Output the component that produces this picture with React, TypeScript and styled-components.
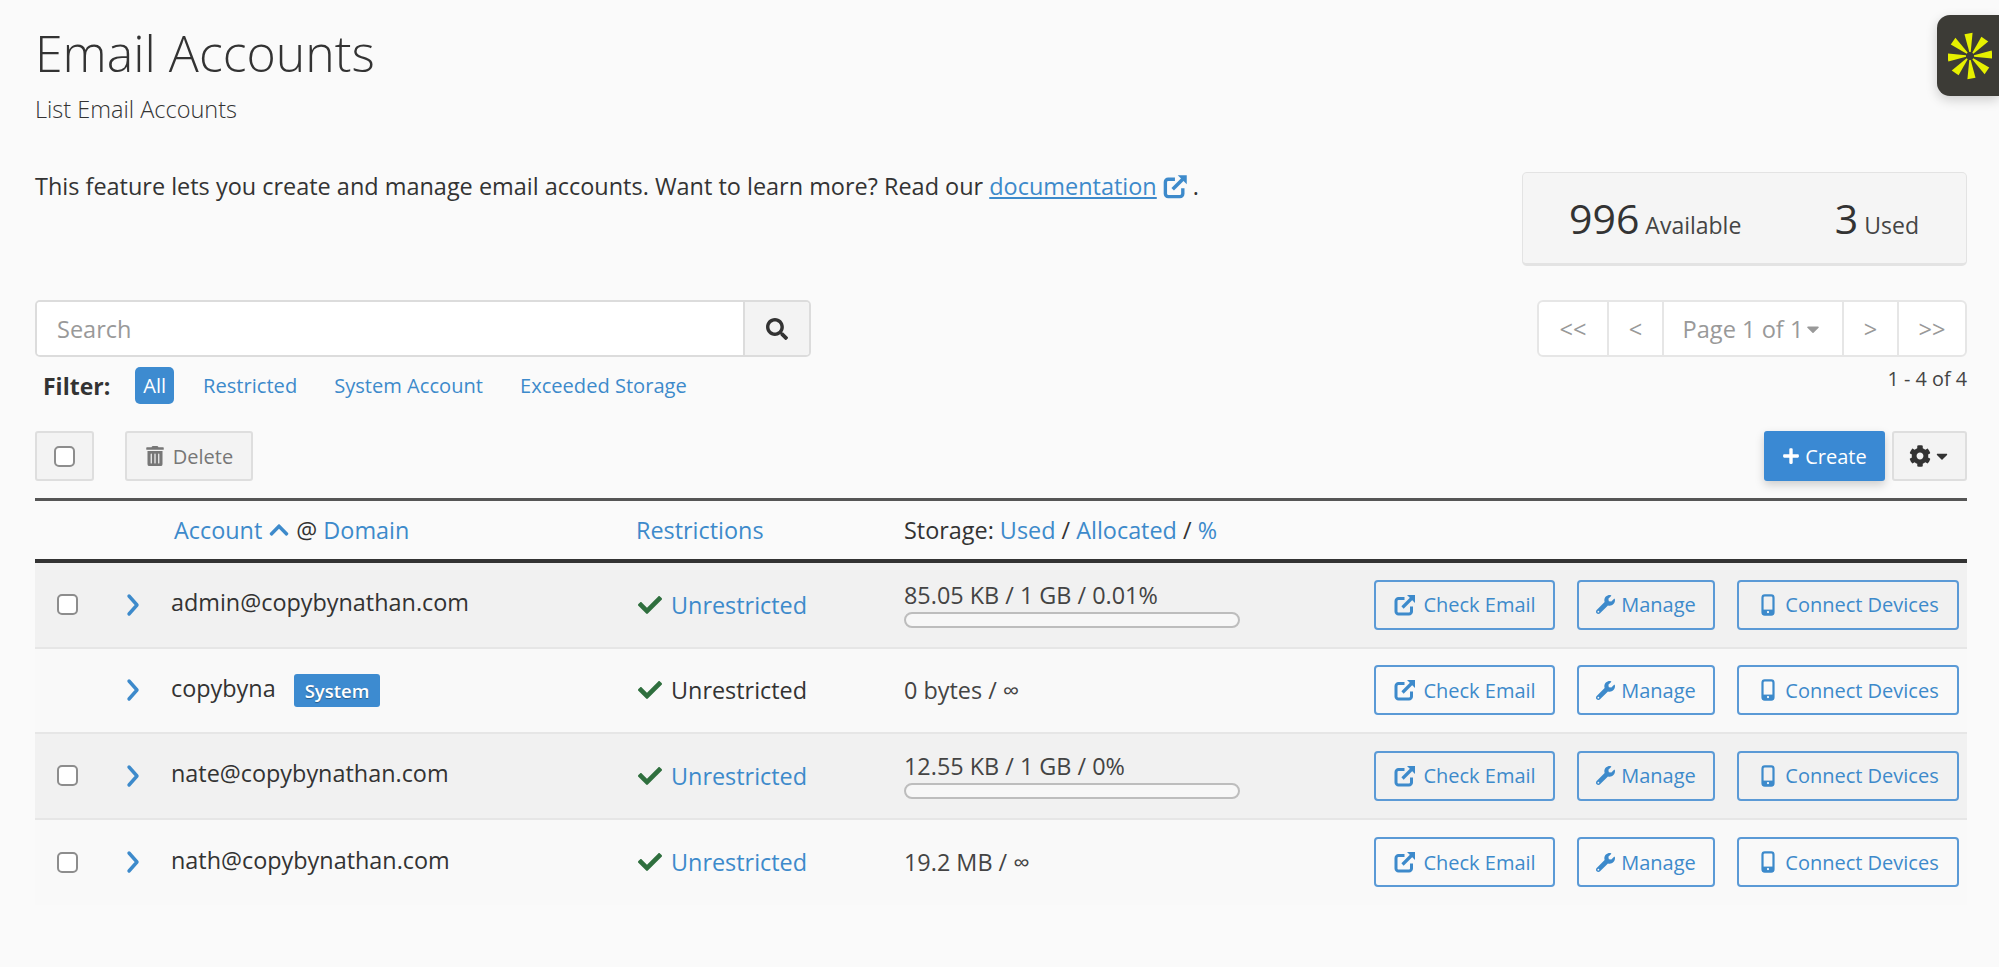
import React from "react";
import styled, { createGlobalStyle } from "styled-components";
import {
  FaSearch,
  FaTrashAlt,
  FaPlus,
  FaCog,
  FaCaretDown,
  FaChevronUp,
  FaCheck,
  FaWrench,
} from "react-icons/fa";

const LINK = "#3d8acb";

const GlobalStyle = createGlobalStyle`
  html, body {
    margin: 0;
    padding: 0;
    background: #fafafa;
    color: #333;
    font-family: "Open Sans", "Liberation Sans", sans-serif;
  }
  * { box-sizing: border-box; }
`;

const Page = styled.div`
  width: 1999px;
  height: 967px;
  padding: 24px 32px 0 35px;
  overflow: hidden;
  position: relative;
`;

const Title = styled.h1`
  margin: 0;
  font-size: 50px;
  line-height: 58px;
  font-weight: 300;
  color: #333;
`;

const Subtitle = styled.div`
  margin-top: 12px;
  font-size: 23.5px;
  line-height: 30px;
  font-weight: 300;
  color: #333;
`;

const IntroRow = styled.div`
  margin-top: 48px;
  display: flex;
  justify-content: space-between;
  align-items: flex-start;
`;

const Intro = styled.p`
  margin: 0;
  font-size: 23.46px;
  line-height: 28px;
  display: flex;
  align-items: center;
  white-space: pre;
`;

const DocLink = styled.a`
  color: ${LINK};
  text-decoration: underline;
`;

const DocIcon = styled.span`
  color: ${LINK};
  display: flex;
  margin: 0 4px 0 5px;
`;

const Stats = styled.div`
  width: 445px;
  height: 94px;
  background: #f5f5f5;
  border: 1px solid #e3e3e3;
  border-bottom-width: 3px;
  border-radius: 5px;
  display: flex;
  justify-content: space-between;
  align-items: baseline;
  padding: 17px 47px 0 46px;
`;

const Stat = styled.div`
  font-size: 23px;
  color: #444;
`;

const StatNumber = styled.span`
  font-size: 41px;
  color: #333;
  margin-right: 6px;
`;

const Toolbar = styled.div`
  margin-top: 34px;
  display: flex;
  justify-content: space-between;
  align-items: flex-start;
`;

const SearchBox = styled.div`
  width: 776px;
  height: 57px;
  display: flex;
  border: 2px solid #dcdcdc;
  border-radius: 5px;
  overflow: hidden;
`;

const SearchInput = styled.input`
  flex: 1;
  min-width: 0;
  border: 0;
  outline: 0;
  background: #fff;
  padding: 0 20px;
  font: inherit;
  font-size: 23.5px;
  line-height: 50px;
  &::placeholder { color: #999; opacity: 1; }
`;

const SearchButton = styled.button`
  width: 66px;
  border: 0;
  border-left: 2px solid #dcdcdc;
  background: #f3f3f3;
  color: #333;
  font-size: 22px;
  display: flex;
  align-items: center;
  justify-content: center;
  padding: 0;
`;

const FilterRow = styled.div`
  margin-top: 10px;
  height: 37px;
  display: flex;
  align-items: center;
  padding-left: 8px;
  font-size: 20.1px;
`;

const FilterLabel = styled.span`
  font-weight: 700;
  font-size: 23px;
  margin-right: 25px;
`;

const FilterItem = styled.a<{ $active?: boolean }>`
  color: ${(p) => (p.$active ? "#fff" : LINK)};
  background: ${(p) => (p.$active ? "#3d8bd0" : "transparent")};
  border-radius: 5px;
  height: 37px;
  line-height: 37px;
  padding: 0 ${(p) => (p.$active ? "8px" : "10px")};
  margin-right: ${(p) => (p.$active ? "19px" : "17px")};
`;

const RightColumn = styled.div`
  display: flex;
  flex-direction: column;
  align-items: flex-end;
`;

const Pager = styled.div`
  height: 57px;
  display: flex;
  background: #fff;
  border: 2px solid #e6e6e6;
  border-radius: 6px;
`;

const PagerCell = styled.div<{ $w: number }>`
  width: ${(p) => p.$w}px;
  display: flex;
  align-items: center;
  justify-content: center;
  color: #999;
  font-size: 23.6px;
  & + & { border-left: 2px solid #e6e6e6; }
`;

const CountLabel = styled.div`
  margin-top: 8px;
  font-size: 19.8px;
  line-height: 28px;
  color: #444;
`;

const ActionBar = styled.div`
  margin-top: 27px;
  display: flex;
  justify-content: space-between;
`;

const ActionGroup = styled.div<{ $gap: number }>`
  display: flex;
  gap: ${(p) => p.$gap}px;
`;

const GreyButton = styled.button<{ $w: number; $muted?: boolean }>`
  width: ${(p) => p.$w}px;
  height: 50px;
  padding: 0;
  border: 2px solid #dedede;
  border-radius: 3px;
  background: #f3f3f3;
  color: ${(p) => (p.$muted ? "#777" : "#333")};
  font: inherit;
  font-size: 20px;
  display: flex;
  align-items: center;
  justify-content: center;
  gap: 8px;
`;

const CreateButton = styled.button`
  width: 121px;
  height: 50px;
  padding: 0;
  border: 0;
  border-radius: 3px;
  background: #3a89d3;
  color: #fff;
  font: inherit;
  font-size: 20px;
  display: flex;
  align-items: center;
  justify-content: center;
  gap: 5px;
  box-shadow: 0 4px 10px rgba(0, 0, 0, 0.18);
`;

const GearGroup = styled.span`
  display: flex;
  align-items: center;
  gap: 2px;
`;

const CheckBox = styled.input.attrs({ type: "checkbox" })`
  appearance: none;
  width: 21px;
  height: 21px;
  margin: 0;
  background: #fff;
  border: 2px solid #8d8d8d;
  border-radius: 5px;
`;

const Table = styled.div`
  margin-top: 17px;
  border-top: 3px solid #555;
`;

const gridColumns = "136px 465px 268px 1fr auto";

const HeaderRow = styled.div`
  height: 62px;
  border-bottom: 4px solid #333;
  display: grid;
  grid-template-columns: ${gridColumns};
  align-items: center;
  font-size: 23.4px;
`;

const HeaderCell = styled.div<{ $col: number; $inset?: number }>`
  grid-column: ${(p) => p.$col};
  padding-left: ${(p) => p.$inset || 0}px;
  display: flex;
  align-items: center;
  white-space: pre;
  color: #333;
`;

const HeadLink = styled.a`
  color: ${LINK};
`;

const SortIcon = styled(FaChevronUp)`
  color: ${LINK};
  margin: 0 6px;
`;

const Row = styled.div<{ $striped: boolean }>`
  height: 85.5px;
  display: grid;
  grid-template-columns: ${gridColumns};
  align-items: center;
  background: ${(p) => (p.$striped ? "#f1f1f1" : "#f9f9f9")};
  border-bottom: 2px solid #e6e6e6;
  &:last-child { border-bottom: 0; }
`;

const SelectCell = styled.div`
  display: flex;
  align-items: center;
  height: 100%;
  padding-left: 22px;
  position: relative;
`;

const ExpandIcon = styled.svg`
  width: 16px;
  height: 24px;
  position: absolute;
  left: 90px;
  top: 50%;
  transform: translateY(-50%);
  fill: none;
  stroke: ${LINK};
  stroke-width: 3.4;
  stroke-linecap: round;
  stroke-linejoin: round;
`;

const AccountCell = styled.div`
  display: flex;
  align-items: center;
  gap: 18px;
  font-size: 23.4px;
  color: #333;
  margin-top: -5px;
`;

const Badge = styled.span`
  background: #3d8bd0;
  color: #fff;
  font-size: 18.5px;
  font-weight: 600;
  line-height: 33px;
  height: 33px;
  padding: 0 11px;
  border-radius: 3px;
  margin-top: 5px;
  text-shadow: 0 1px 1px rgba(0, 0, 0, 0.35);
`;

const RestrictionCell = styled.div<{ $link: boolean }>`
  display: flex;
  align-items: center;
  gap: 9px;
  font-size: 23.4px;
  padding-left: 2px;
  color: ${(p) => (p.$link ? LINK : "#333")};
  & > svg { color: #2f6f3e; font-size: 24px; }
`;

const StorageCell = styled.div`
  font-size: 23.4px;
  line-height: 28px;
  color: #444;
`;

const StorageBar = styled.div`
  width: 336px;
  height: 16px;
  margin-top: 3px;
  border: 2px solid #bdbdbd;
  border-radius: 8px;
  background: #f7f7f7;
`;

const ButtonGroup = styled.div`
  display: flex;
  gap: 22px;
  padding-right: 8px;
`;

const RowButton = styled.a<{ $w: number }>`
  width: ${(p) => p.$w}px;
  height: 50px;
  border: 2px solid #5b9ad6;
  border-radius: 4px;
  color: ${LINK};
  font-size: 20px;
  display: flex;
  align-items: center;
  justify-content: center;
  gap: 6px;
`;

const IconSvg = styled.svg<{ $size: number }>`
  width: ${(p) => p.$size}px;
  height: ${(p) => p.$size}px;
  flex-shrink: 0;
`;

const Launcher = styled.div`
  position: absolute;
  right: 0;
  top: 15px;
  width: 62px;
  height: 81px;
  background: #3c3b36;
  border-radius: 13px 0 0 13px;
  box-shadow: 0 4px 12px rgba(0, 0, 0, 0.18);
  display: flex;
  align-items: center;
  justify-content: flex-start;
  padding-left: 11px;
`;

const ExternalIcon = ({ size }: { size: number }) => (
  <IconSvg $size={size} viewBox="0 0 24 24" fill="none" stroke="currentColor">
    <path
      d="M18.5 13.5v5a2.5 2.5 0 0 1-2.5 2.5H5.5A2.5 2.5 0 0 1 3 18.5V8a2.5 2.5 0 0 1 2.5-2.5h6"
      strokeWidth="3"
    />
    <path d="M9.5 14.5L20 4" strokeWidth="3.2" />
    <path d="M14 2h8v8z" fill="currentColor" stroke="none" />
  </IconSvg>
);

const MobileIcon = () => (
  <IconSvg $size={22} viewBox="0 0 24 24" fill="none" stroke="currentColor">
    <rect x="6" y="1.5" width="12" height="21" rx="2.5" strokeWidth="2.4" />
    <rect x="6" y="17" width="12" height="5.5" fill="currentColor" stroke="none" />
    <circle cx="12" cy="19.7" r="1.2" fill="#fff" stroke="none" />
  </IconSvg>
);

const Asterisk = () => (
  <svg width="44" height="50" viewBox="-22 -25 44 50">
    {[0, 45, 90, 135, 180, 225, 270, 315].map((a) => (
      <polygon
        key={a}
        points="-0.4,-4 -4,-22 4.2,-23 1,-4"
        fill="#e6f000"
        transform={`rotate(${a - 4})`}
      />
    ))}
  </svg>
);

type Account = {
  name: string;
  system?: boolean;
  selectable: boolean;
  usage: string;
  bar: boolean;
};

const accounts: Account[] = [
  { name: "admin@copybynathan.com", selectable: true, usage: "85.05 KB / 1 GB / 0.01%", bar: true },
  { name: "copybyna", system: true, selectable: false, usage: "0 bytes / ∞", bar: false },
  { name: "nate@copybynathan.com", selectable: true, usage: "12.55 KB / 1 GB / 0%", bar: true },
  { name: "nath@copybynathan.com", selectable: true, usage: "19.2 MB / ∞", bar: false },
];

export default function App() {
  return (
    <Page>
      <GlobalStyle />
      <Title>Email Accounts</Title>
      <Subtitle>List Email Accounts</Subtitle>

      <IntroRow>
        <Intro>
          This feature lets you create and manage email accounts. Want to learn more? Read our{" "}
          <DocLink>documentation</DocLink>
          <DocIcon>
            <ExternalIcon size={27} />
          </DocIcon>
          .
        </Intro>
        <Stats>
          <Stat>
            <StatNumber>996</StatNumber>Available
          </Stat>
          <Stat>
            <StatNumber>3</StatNumber>Used
          </Stat>
        </Stats>
      </IntroRow>

      <Toolbar>
        <div>
          <SearchBox>
            <SearchInput placeholder="Search" />
            <SearchButton>
              <FaSearch />
            </SearchButton>
          </SearchBox>
          <FilterRow>
            <FilterLabel>Filter:</FilterLabel>
            <FilterItem $active>All</FilterItem>
            <FilterItem>Restricted</FilterItem>
            <FilterItem>System Account</FilterItem>
            <FilterItem>Exceeded Storage</FilterItem>
          </FilterRow>
        </div>
        <RightColumn>
          <Pager>
            <PagerCell $w={68}>&lt;&lt;</PagerCell>
            <PagerCell $w={55}>&lt;</PagerCell>
            <PagerCell $w={180}>
              Page 1 of 1
              <FaCaretDown size={20} />
            </PagerCell>
            <PagerCell $w={55}>&gt;</PagerCell>
            <PagerCell $w={68}>&gt;&gt;</PagerCell>
          </Pager>
          <CountLabel>1 - 4 of 4</CountLabel>
        </RightColumn>
      </Toolbar>

      <ActionBar>
        <ActionGroup $gap={31}>
          <GreyButton $w={59}>
            <CheckBox />
          </GreyButton>
          <GreyButton $w={128} $muted>
            <FaTrashAlt size={20} />
            Delete
          </GreyButton>
        </ActionGroup>
        <ActionGroup $gap={7}>
          <CreateButton>
            <FaPlus size={18} />
            Create
          </CreateButton>
          <GreyButton $w={75}>
            <GearGroup>
              <FaCog size={22} />
              <FaCaretDown size={18} />
            </GearGroup>
          </GreyButton>
        </ActionGroup>
      </ActionBar>

      <Table>
        <HeaderRow>
          <HeaderCell $col={2} $inset={3}>
            <HeadLink>Account</HeadLink>
            <SortIcon size={22} />
            @ <HeadLink>Domain</HeadLink>
          </HeaderCell>
          <HeaderCell $col={3}>
            <HeadLink>Restrictions</HeadLink>
          </HeaderCell>
          <HeaderCell $col={4}>
            Storage: <HeadLink>Used</HeadLink> / <HeadLink>Allocated</HeadLink> / <HeadLink>%</HeadLink>
          </HeaderCell>
        </HeaderRow>

        {accounts.map((a, i) => (
          <Row key={a.name} $striped={i % 2 === 0}>
            <SelectCell>
              {a.selectable && <CheckBox />}
              <ExpandIcon viewBox="0 0 16 24">
                <path d="M4 3l8 9-8 9" />
              </ExpandIcon>
            </SelectCell>
            <AccountCell>
              {a.name}
              {a.system && <Badge>System</Badge>}
            </AccountCell>
            <RestrictionCell $link={!a.system}>
              <FaCheck />
              Unrestricted
            </RestrictionCell>
            <StorageCell>
              {a.usage}
              {a.bar && <StorageBar />}
            </StorageCell>
            <ButtonGroup>
              <RowButton $w={181}>
                <ExternalIcon size={24} />
                Check Email
              </RowButton>
              <RowButton $w={138}>
                <FaWrench size={19} />
                Manage
              </RowButton>
              <RowButton $w={222}>
                <MobileIcon />
                Connect Devices
              </RowButton>
            </ButtonGroup>
          </Row>
        ))}
      </Table>

      <Launcher>
        <Asterisk />
      </Launcher>
    </Page>
  );
}
